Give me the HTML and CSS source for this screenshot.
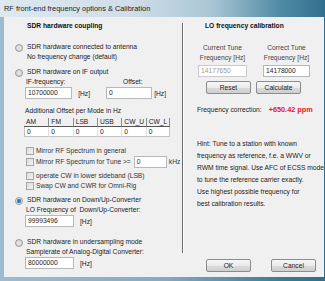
FILE: index.html
```html
<!DOCTYPE html>
<html lang="en">
<head>
    <meta charset="UTF-8">
    <title>RF front-end frequency options &amp; Calibration</title>
    <link rel="stylesheet" href="styles.css">
</head>
<body>
    <div class="window">
        <div class="titlebar">RF front-end frequency options &amp; Calibration</div>
        <div class="frame">
            <div class="client">
                <div class="left-panel">
                    <div class="group-title left-title">SDR hardware coupling</div>

                    <div class="option r1">
                        <span class="radio"></span>
                        <span>SDR hardware connected to antenna<br>No frequency change (default)</span>
                    </div>

                    <div class="option r2">
                        <span class="radio"></span>
                        <span>SDR hardware on IF output</span>
                    </div>
                    <div class="sub-labels">
                        <span class="lbl-if">IF-frequency:</span>
                        <span>Offset:</span>
                    </div>
                    <div class="field-row">
                        <div class="textbox w47">10700000</div>
                        <span class="unit">[Hz]</span>
                        <div class="textbox w46">0</div>
                        <span class="unit unit-tight">[Hz]</span>
                    </div>

                    <div class="caption">Additional Offset per Mode in Hz</div>
                    <div class="mode-grid">
                        <div class="head">AM</div>
                        <div class="head">FM</div>
                        <div class="head">LSB</div>
                        <div class="head">USB</div>
                        <div class="head">CW_U</div>
                        <div class="head">CW_L</div>
                        <div class="cell">0</div>
                        <div class="cell">0</div>
                        <div class="cell">0</div>
                        <div class="cell">0</div>
                        <div class="cell">0</div>
                        <div class="cell">0</div>
                    </div>

                    <div class="check c1"><span class="box"></span>Mirror RF Spectrum in general</div>
                    <div class="check c2">
                        <span class="box"></span>Mirror RF Spectrum for Tune &gt;=
                        <div class="textbox w31 tune-box">0</div>
                        <span class="khz">kHz</span>
                    </div>
                    <div class="check c3"><span class="box"></span>operate CW in lower sideband (LSB)</div>
                    <div class="check c4"><span class="box"></span>Swap CW and CWR for Omni-Rig</div>

                    <div class="option r3">
                        <span class="radio checked"></span>
                        <span>SDR hardware on Down/Up-Converter</span>
                    </div>
                    <div class="sub-labels">LO Frequency of&nbsp; Down/Up-Converter:</div>
                    <div class="field-row">
                        <div class="textbox w47">99993496</div>
                        <span class="unit">[Hz]</span>
                    </div>

                    <div class="option r4">
                        <span class="radio"></span>
                        <span>SDR hardware in undersampling mode</span>
                    </div>
                    <div class="sub-labels">Samplerate of Analog-Digital Converter:</div>
                    <div class="field-row">
                        <div class="textbox w47">80000000</div>
                        <span class="unit">[Hz]</span>
                    </div>
                </div>

                <div class="separator"></div>

                <div class="right-panel">
                    <div class="group-title right-title">LO frequency calibration</div>
                    <div class="cal-cols">
                        <div class="cal-col">
                            <div class="cal-label">Current Tune<br>Frequency [Hz]</div>
                            <div class="textbox w47 disabled">14177650</div>
                        </div>
                        <div class="cal-col col2">
                            <div class="cal-label">Correct Tune<br>Frequency [Hz]</div>
                            <div class="textbox w45">14178000</div>
                        </div>
                    </div>
                    <div class="btn-row">
                        <button class="btn">Reset</button>
                        <button class="btn">Calculate</button>
                    </div>
                    <div class="correction">
                        <span>Frequency correction:</span>
                        <span class="ppm">+650.42 ppm</span>
                    </div>
                    <div class="hint">
                        Hint: Tune to a station with known<br>
                        frequency as reference, f.e. a WWV or<br>
                        RWM time signal. Use AFC of ECSS mode<br>
                        to tune the reference carrier exactly.<br>
                        Use highest possible frequency for<br>
                        best calibration results.
                    </div>
                    <div class="dialog-buttons">
                        <button class="btn">OK</button>
                        <button class="btn cancel">Cancel</button>
                    </div>
                </div>
            </div>
        </div>
    </div>
</body>
</html>
```

FILE: styles.css
```css
body {
    margin: 0;
    font-family: "Liberation Sans", Arial, sans-serif;
    font-size: 6.7px;
    color: #222;
    white-space: nowrap;
}
.window {
    width: 325px;
    height: 281px;
    display: flex;
    flex-direction: column;
    background: linear-gradient(90deg, #9dbcd2 0%, #86aac2 50%, #3f7d9a 85%, #2e6d8c 100%);
}
.titlebar {
    height: 17px;
    line-height: 17px;
    padding-left: 4px;
    font-size: 7.4px;
    color: #1c1c1c;
    background: linear-gradient(90deg, #dde8f0 0%, #d0dee9 40%, #aac6d5 65%, #548ea7 85%, #306f8d 100%);
}
.frame {
    flex: 1;
    display: flex;
    padding: 0 7px 4px 4px;
}
.client {
    flex: 1;
    display: flex;
    background-color: #f0f0f0;
}
.left-panel {
    width: 167px;
    padding-left: 11px;
    display: flex;
    flex-direction: column;
}
.separator {
    width: 1px;
    margin: 6px 0 24px 0;
    background-color: #6d6d6d;
    border-right: 1px solid #fff;
}
.right-panel {
    flex: 1;
    padding-left: 4px;
    display: flex;
    flex-direction: column;
}
.group-title {
    font-weight: bold;
    line-height: 10px;
    margin-top: 4px;
    color: #111;
}
.left-title {
    margin-left: 12px;
}
.right-title {
    margin-left: 17px;
}
.option {
    display: flex;
    align-items: flex-start;
    line-height: 10px;
}
.radio {
    width: 6px;
    height: 6px;
    margin: 2px 4px 0 0;
    border: 1px solid #9a9a9a;
    border-radius: 50%;
    background: radial-gradient(circle, #e8e8e8 0%, #d0d0d0 100%);
    flex-shrink: 0;
}
.radio.checked {
    background: radial-gradient(circle, #2f6fb0 0%, #3d84c4 45%, #dfe8f0 60%, #d7dde3 100%);
}
.r1 { margin-top: 11px; }
.r2 { margin-top: 5px; }
.r3 { margin-top: 4px; }
.r4 { margin-top: 10px; }
.sub-labels {
    margin-left: 11px;
    line-height: 10px;
    display: flex;
}
.lbl-if {
    width: 97px;
}
.field-row {
    display: flex;
    align-items: center;
    margin-left: 10px;
    height: 12px;
}
.textbox {
    height: 10px;
    line-height: 10px;
    padding-left: 2px;
    border: 1px solid #b5b8bd;
    background-color: #fff;
    box-sizing: content-box;
}
.w47 { width: 45px; }
.w46 { width: 44px; }
.w45 { width: 43px; }
.w31 { width: 29px; }
.unit {
    margin-left: 6px;
    width: 29px;
}
.unit-tight {
    margin-left: 2px;
}
.caption {
    margin-top: 7px;
    margin-left: 10px;
    line-height: 10px;
}
.mode-grid {
    margin: 2px 0 0 9px;
    width: 146px;
    display: grid;
    grid-template-columns: repeat(6, 1fr);
}
.mode-grid .head {
    height: 8px;
    line-height: 8px;
    padding-left: 2px;
    border-bottom: 1px solid #555;
    border-left: 1px solid #8a8a8a;
}
.mode-grid .head:first-child {
    border-left: none;
}
.mode-grid .head:nth-child(6) {
    border-right: 1px solid #8a8a8a;
}
.mode-grid .cell {
    height: 9px;
    line-height: 9px;
    padding-left: 2px;
    background-color: #fff;
    border-bottom: 1px solid #c4c4c4;
    border-left: 1px solid #e2e2e2;
}
.mode-grid .cell:nth-child(7) {
    border-left: 1px solid #c4c4c4;
}
.mode-grid .cell:last-child {
    border-right: 1px solid #c4c4c4;
}
.check {
    display: flex;
    align-items: center;
    margin-left: 11px;
    height: 10px;
    line-height: 10px;
    color: #333;
}
.box {
    width: 6px;
    height: 6px;
    margin-right: 2px;
    border: 1px solid #a5a5a5;
    background: linear-gradient(135deg, #dcdcdc, #f4f4f4);
    flex-shrink: 0;
}
.c1 { margin-top: 9px; }
.c2 { height: 11px; }
.c3 { margin-top: 4px; }
.tune-box {
    margin-left: 3px;
}
.khz {
    margin-left: 2px;
}
.cal-cols {
    display: flex;
    margin-top: 12px;
}
.cal-col {
    display: flex;
    flex-direction: column;
    align-items: center;
    margin-left: 10px;
}
.cal-col.col2 {
    margin-left: 16px;
}
.cal-label {
    text-align: center;
    line-height: 10px;
    height: 22px;
    color: #444;
}
.textbox.disabled {
    color: #9a9a9a;
    border-color: #c9cbcf;
}
.btn-row {
    display: flex;
    gap: 5px;
    margin: 4px 0 0 18px;
}
.btn {
    width: 45px;
    height: 13px;
    padding: 0;
    font-family: "Liberation Sans", Arial, sans-serif;
    font-size: 6.7px;
    color: #222;
    border: 1px solid #8c8c8c;
    border-radius: 2px;
    background: linear-gradient(#f6f6f6 0%, #ebebeb 50%, #dbdbdb 51%, #cfcfcf 100%);
}
.correction {
    margin: 11px 0 0 9px;
    line-height: 10px;
    display: flex;
}
.ppm {
    margin-left: 7px;
    color: #e0202c;
    font-weight: bold;
    font-size: 7.3px;
}
.hint {
    margin: 23px 0 0 9px;
    line-height: 12px;
}
.dialog-buttons {
    display: flex;
    margin: auto 0 5px 18px;
}
.dialog-buttons .cancel {
    margin-left: 20px;
}
```
